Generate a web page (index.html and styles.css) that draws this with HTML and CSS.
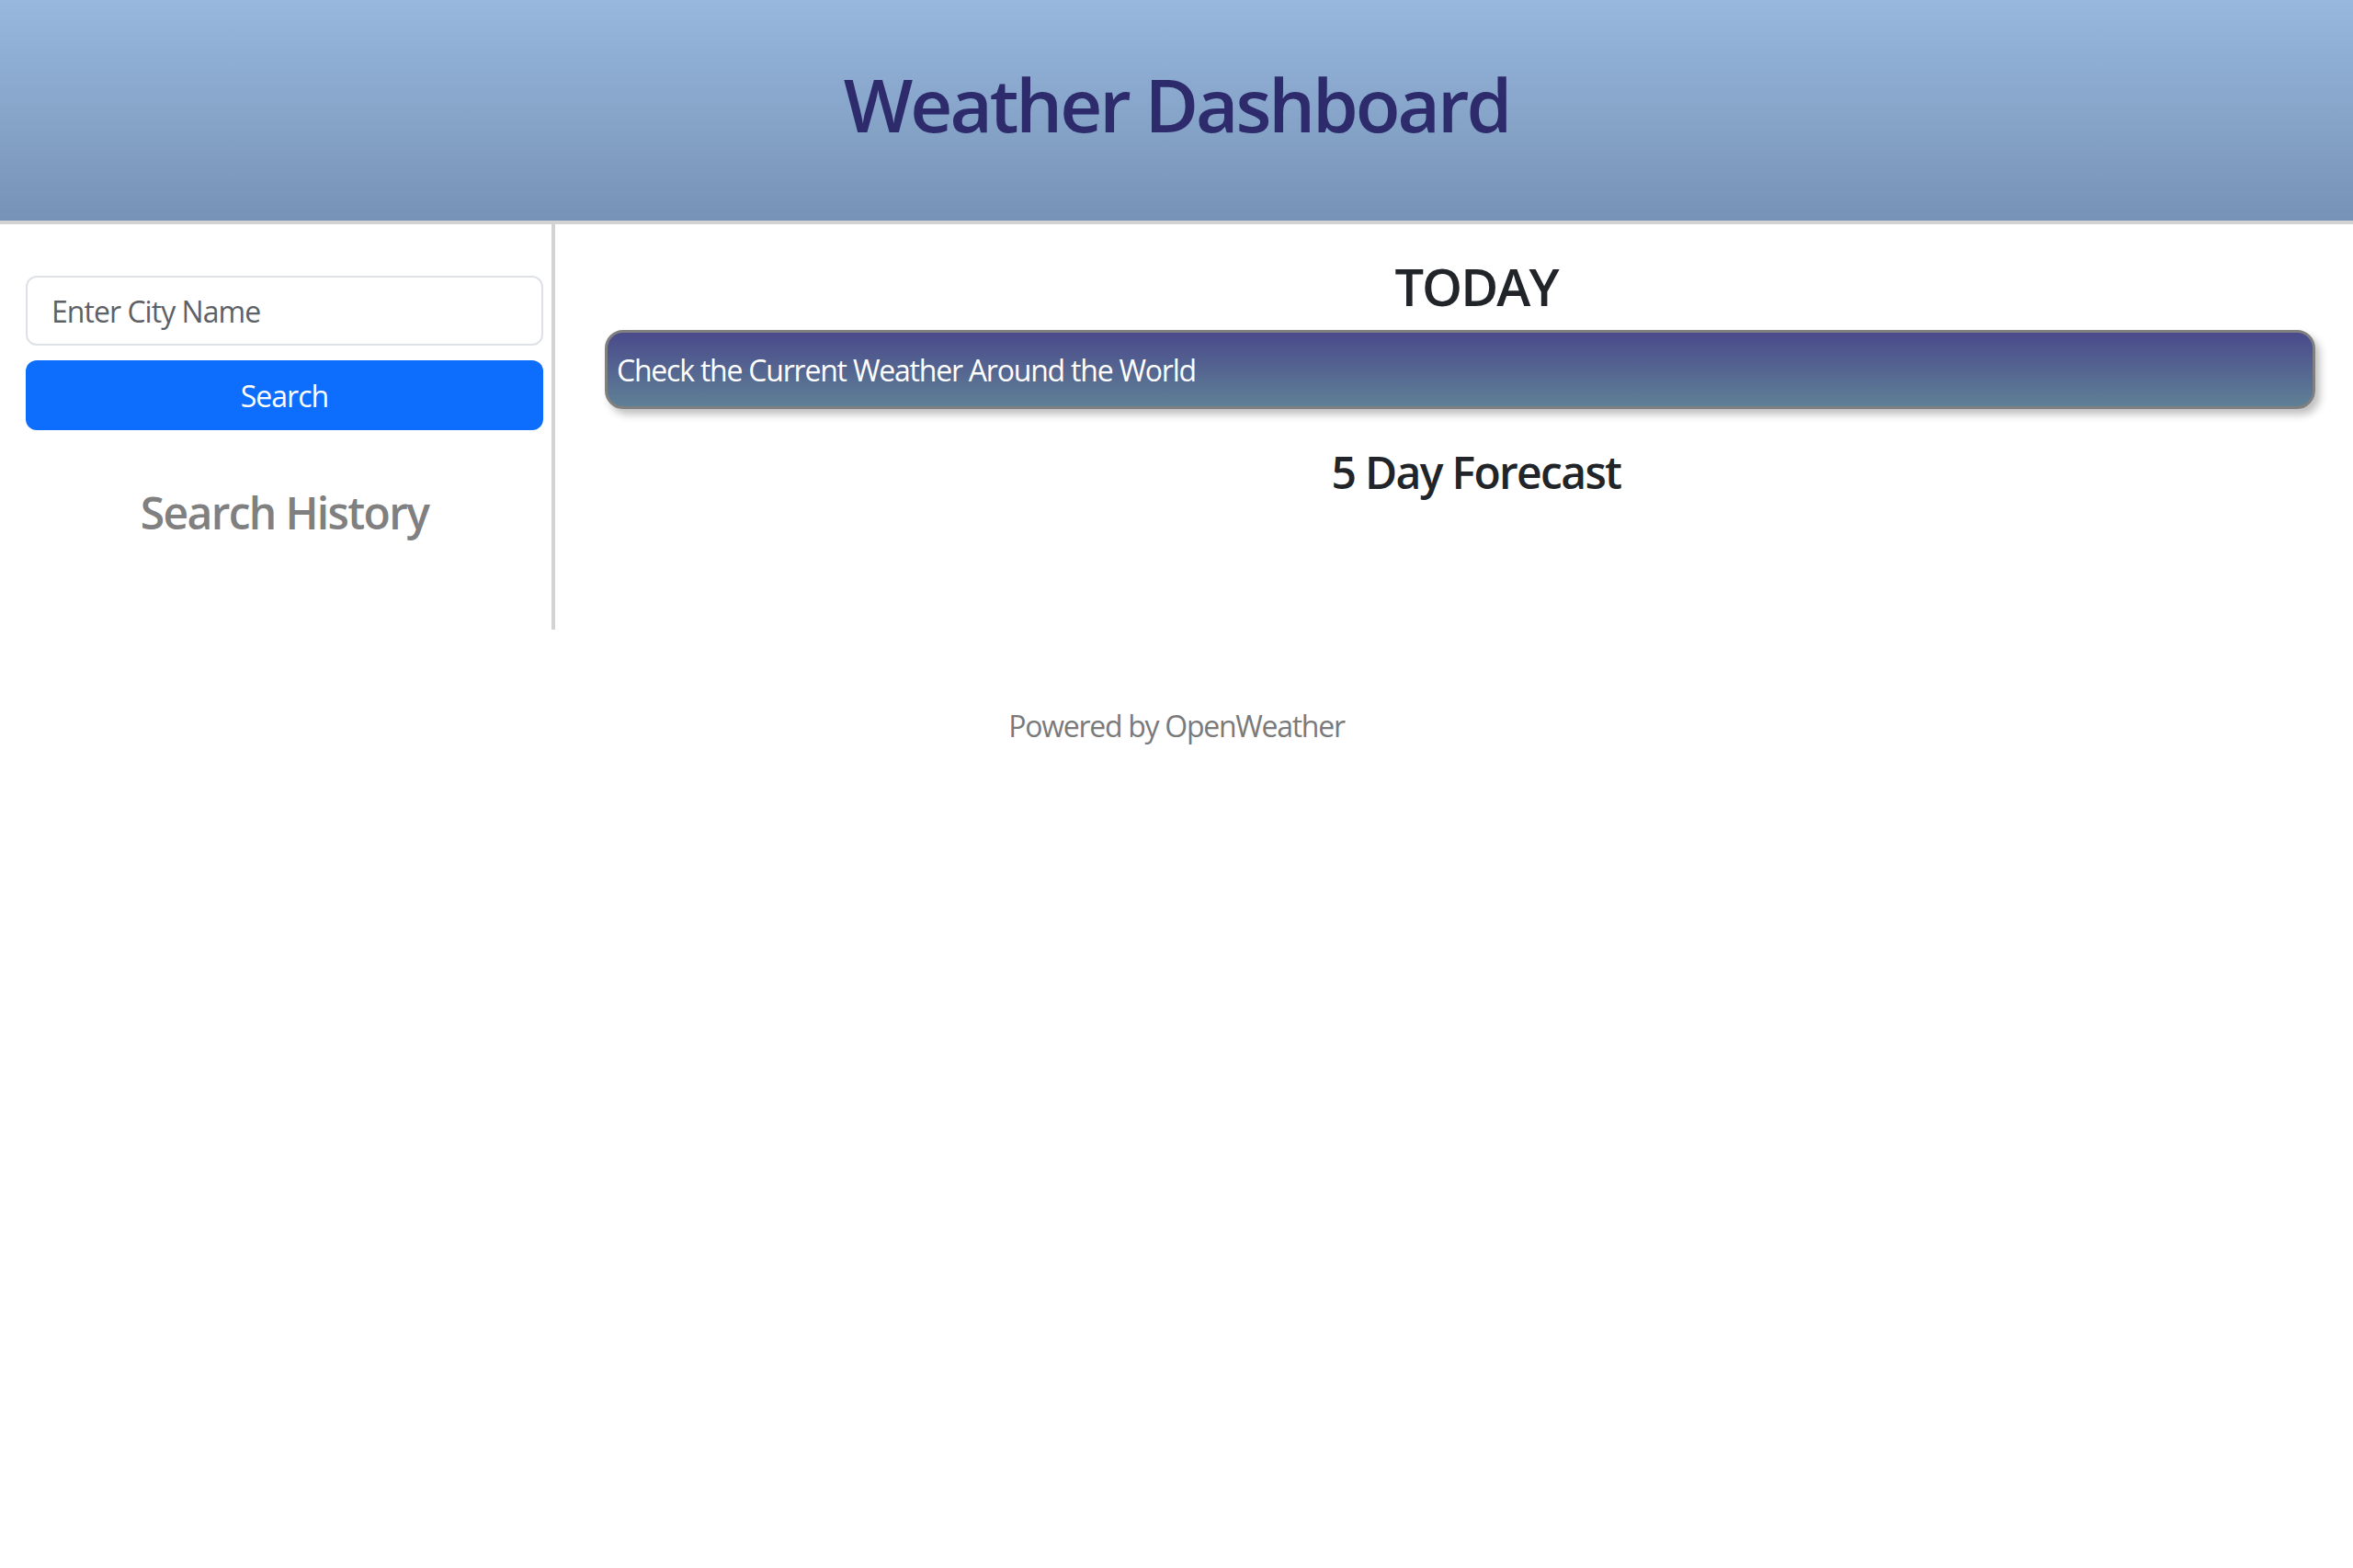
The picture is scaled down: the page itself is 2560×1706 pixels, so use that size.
FILE: index.html
```html
<!DOCTYPE html>
<html lang="en">
<head>
<meta charset="utf-8">
<title>Weather Dashboard</title>
<link rel="stylesheet" href="styles.css">
</head>
<body>
<header class="site-header">
  <h1 class="site-title">Weather Dashboard</h1>
</header>
<div class="layout">
  <aside class="sidebar">
    <input class="city-input" type="text" placeholder="Enter City Name">
    <button class="search-btn" type="button">Search</button>
    <h4 class="history-title">Search History</h4>
  </aside>
  <main class="content">
    <h3 class="today-title">TODAY</h3>
    <div class="today-banner">Check the Current Weather Around the World</div>
    <h4 class="forecast-title">5 Day Forecast</h4>
  </main>
</div>
<footer class="site-footer">Powered by OpenWeather</footer>
</body>
</html>
```
FILE: styles.css
```css
* { box-sizing: border-box; }
html, body { margin: 0; padding: 0; }
body {
  font-family: "Open Sans", "Noto Sans", "Liberation Sans", sans-serif;
  color: #212529;
  background: #fff;
  letter-spacing: -0.03em;
}
.site-header {
  height: 244px;
  background: linear-gradient(to bottom, #98b8dd, #7792b7);
  border-bottom: 4px solid #d3d3d3;
  padding-top: 65px;
}
.site-title {
  margin: 0;
  text-align: center;
  font-size: 80px;
  line-height: 96px;
  font-weight: 600;
  letter-spacing: -0.038em;
  color: #2d2b6b;
}
.layout {
  display: flex;
}
.sidebar {
  width: 604px;
  height: 441px;
  border-right: 4px solid #d3d3d3;
  padding: 56px 9px 0 28px;
  display: flex;
  flex-direction: column;
}
.city-input {
  width: 100%;
  height: 76px;
  border: 2px solid #dee2e6;
  border-radius: 12px;
  padding: 0 26px;
  font-family: inherit;
  font-size: 32px;
  letter-spacing: -0.03em;
  color: #212529;
  outline: none;
}
.city-input::placeholder { color: #5d6166; }
.search-btn {
  margin-top: 16px;
  width: 100%;
  height: 76px;
  border: none;
  border-radius: 12px;
  background: #0d6efd;
  color: #fff;
  font-family: inherit;
  font-size: 32px;
  letter-spacing: -0.03em;
}
.history-title {
  margin: 61px 0 0;
  text-align: center;
  font-size: 48px;
  line-height: 58px;
  font-weight: 600;
  letter-spacing: -0.035em;
  color: #808080;
}
.content {
  flex: 1;
  padding-left: 48px;
  display: flex;
  flex-direction: column;
}
.today-title {
  margin: 34px 0 0;
  text-align: center;
  font-size: 56px;
  line-height: 67px;
  font-weight: 600;
  letter-spacing: -0.035em;
}
.today-banner {
  margin: 14px 41px 0 6px;
  height: 86px;
  border: 3px solid #808080;
  border-radius: 20px;
  background: linear-gradient(to bottom, #4a4a8b, #5f8096);
  box-shadow: 5px 6px 8px rgba(0, 0, 0, 0.25);
  color: #fff;
  font-size: 32px;
  letter-spacing: -0.038em;
  display: flex;
  align-items: center;
  padding-left: 10px;
}
.forecast-title {
  margin: 40px 0 0;
  text-align: center;
  font-size: 48px;
  line-height: 58px;
  font-weight: 600;
  letter-spacing: -0.035em;
}
.site-footer {
  text-align: center;
  font-size: 32px;
  line-height: 48px;
  letter-spacing: -0.04em;
  color: #7a7a7a;
  margin-top: 81px;
}
```
